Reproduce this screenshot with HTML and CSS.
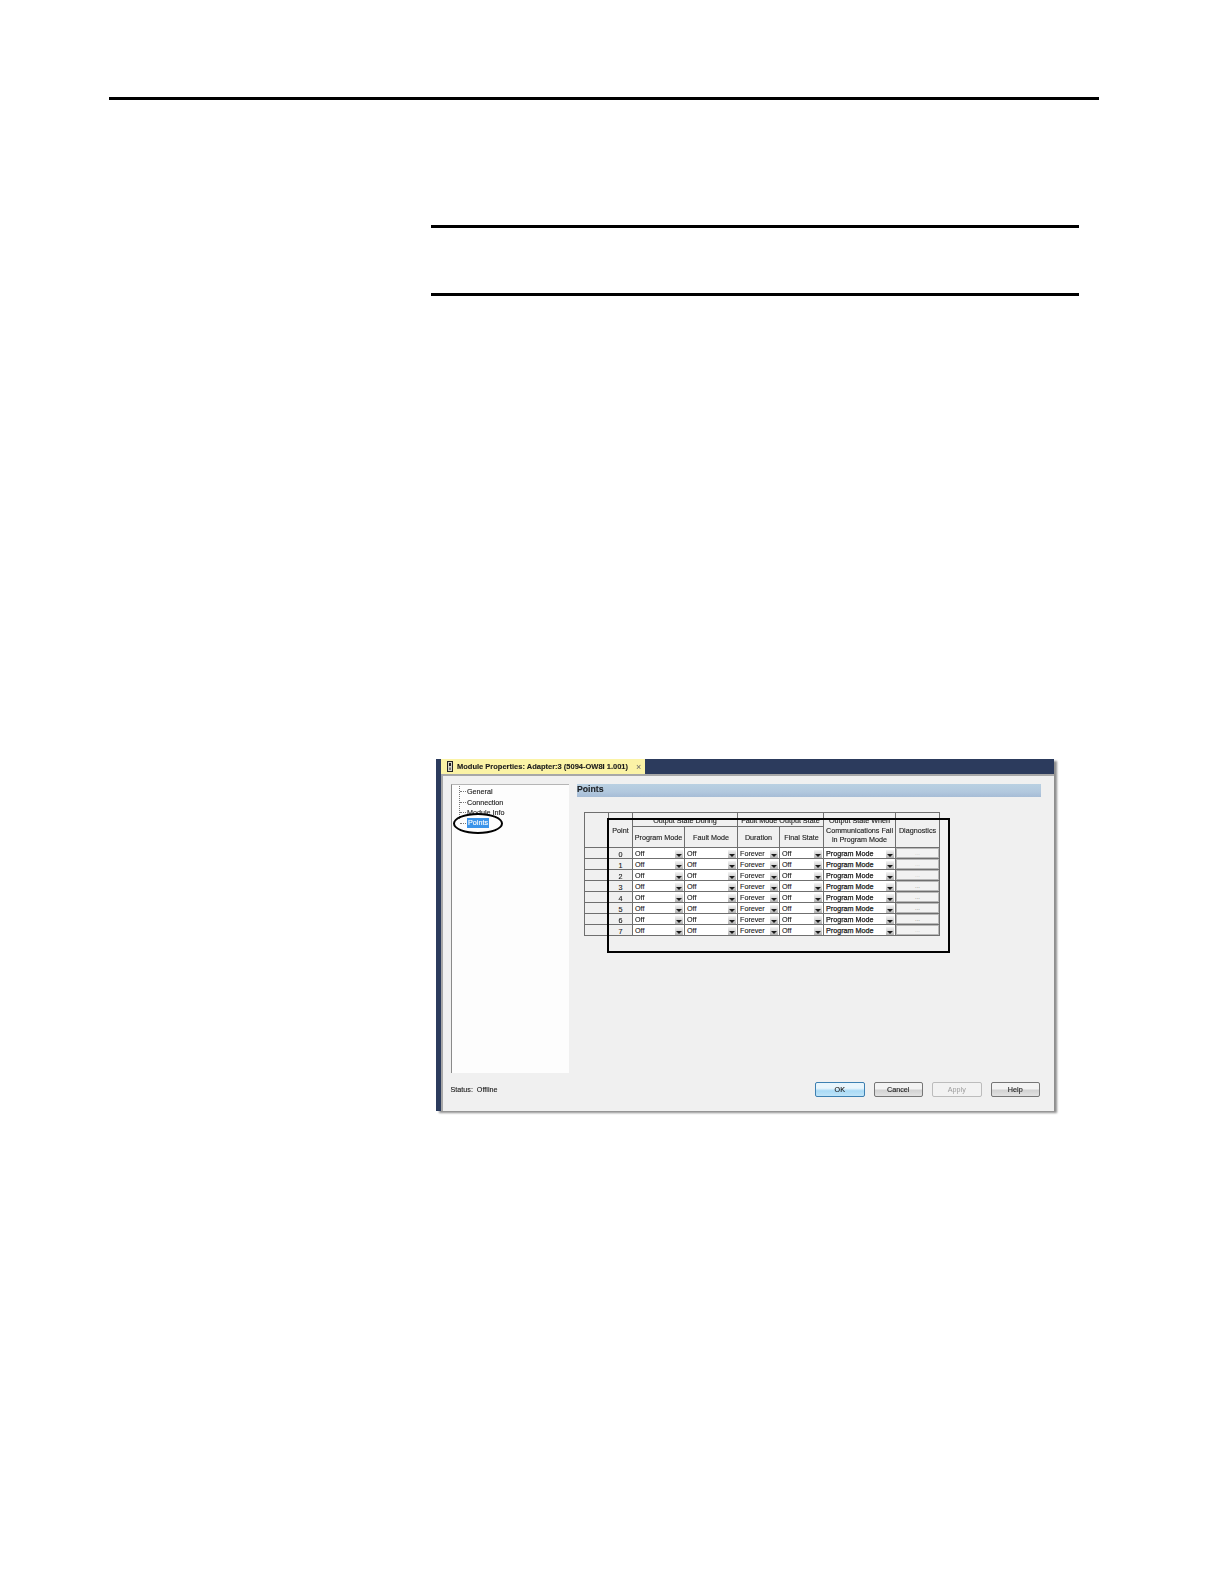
FILE: index.html
```html
<!DOCTYPE html>
<html lang="en">
<head>
<meta charset="utf-8">
<title>Module Properties</title>
<link rel="stylesheet" href="styles.css">
</head>
<body>
<div class="page-rule"></div>
<div class="note-rule note-top"></div>
<div class="note-rule note-bottom"></div>
<section class="dialog">
  <header class="titlebar">
    <div class="tab">
      <svg class="tab-icon" width="6" height="11" viewBox="0 0 6 11"><rect x="0.5" y="0.5" width="5" height="10" fill="#d8d8c8" stroke="#222"/><rect x="2" y="2" width="2" height="3" fill="#222"/><rect x="2" y="6.5" width="2" height="2.5" fill="#777"/></svg>
      <span class="tab-title">Module Properties: Adapter:3 (5094-OW8I 1.001)</span>
      <span class="tab-close">×</span>
    </div>
  </header>
  <div class="titleshade"></div>
  <div class="content">
    <nav class="tree">
      <ul class="tree-list">
        <li class="tree-item"><span>General</span></li>
        <li class="tree-item"><span>Connection</span></li>
        <li class="tree-item"><span>Module Info</span></li>
        <li class="tree-item"><span class="selected">Points</span></li>
      </ul>
    </nav>
    <main class="panel">
      <h2 class="panel-title">Points</h2>
      <div class="grid">
        <div class="cell hd span-r2"></div>
        <div class="cell hd span-r2 ctr">Point</div>
        <div class="cell hd span-c2 low">Output State During</div>
        <div class="cell hd span-c2 low">Fault Mode Output State</div>
        <div class="cell hd span-r2 ctr multi">Output State When<br>Communications Fail<br>in Program Mode</div>
        <div class="cell hd span-r2 ctr">Diagnostics</div>
        <div class="cell hd ctr">Program Mode</div>
        <div class="cell hd ctr">Fault Mode</div>
        <div class="cell hd ctr">Duration</div>
        <div class="cell hd ctr">Final State</div>

        <div class="cell hd"></div><div class="cell hd num">0</div><div class="cell val">Off<i class="drop"></i></div><div class="cell val">Off<i class="drop"></i></div><div class="cell val">Forever<i class="drop"></i></div><div class="cell val">Off<i class="drop"></i></div><div class="cell val strong">Program Mode<i class="drop"></i></div><div class="cell hd diag"><b class="dots faint">...</b></div>
        <div class="cell hd"></div><div class="cell hd num">1</div><div class="cell val">Off<i class="drop"></i></div><div class="cell val">Off<i class="drop"></i></div><div class="cell val">Forever<i class="drop"></i></div><div class="cell val">Off<i class="drop"></i></div><div class="cell val strong">Program Mode<i class="drop"></i></div><div class="cell hd diag"><b class="dots faint">...</b></div>
        <div class="cell hd"></div><div class="cell hd num">2</div><div class="cell val">Off<i class="drop"></i></div><div class="cell val">Off<i class="drop"></i></div><div class="cell val">Forever<i class="drop"></i></div><div class="cell val">Off<i class="drop"></i></div><div class="cell val strong">Program Mode<i class="drop"></i></div><div class="cell hd diag"><b class="dots faint">...</b></div>
        <div class="cell hd"></div><div class="cell hd num">3</div><div class="cell val">Off<i class="drop"></i></div><div class="cell val">Off<i class="drop"></i></div><div class="cell val">Forever<i class="drop"></i></div><div class="cell val">Off<i class="drop"></i></div><div class="cell val strong">Program Mode<i class="drop"></i></div><div class="cell hd diag"><b class="dots">...</b></div>
        <div class="cell hd"></div><div class="cell hd num">4</div><div class="cell val">Off<i class="drop"></i></div><div class="cell val">Off<i class="drop"></i></div><div class="cell val">Forever<i class="drop"></i></div><div class="cell val">Off<i class="drop"></i></div><div class="cell val strong">Program Mode<i class="drop"></i></div><div class="cell hd diag"><b class="dots">...</b></div>
        <div class="cell hd"></div><div class="cell hd num">5</div><div class="cell val">Off<i class="drop"></i></div><div class="cell val">Off<i class="drop"></i></div><div class="cell val">Forever<i class="drop"></i></div><div class="cell val">Off<i class="drop"></i></div><div class="cell val strong">Program Mode<i class="drop"></i></div><div class="cell hd diag"><b class="dots">...</b></div>
        <div class="cell hd"></div><div class="cell hd num">6</div><div class="cell val">Off<i class="drop"></i></div><div class="cell val">Off<i class="drop"></i></div><div class="cell val">Forever<i class="drop"></i></div><div class="cell val">Off<i class="drop"></i></div><div class="cell val strong">Program Mode<i class="drop"></i></div><div class="cell hd diag"><b class="dots">...</b></div>
        <div class="cell hd"></div><div class="cell hd num">7</div><div class="cell val">Off<i class="drop"></i></div><div class="cell val">Off<i class="drop"></i></div><div class="cell val">Forever<i class="drop"></i></div><div class="cell val">Off<i class="drop"></i></div><div class="cell val strong">Program Mode<i class="drop"></i></div><div class="cell hd diag"><b class="dots faint">...</b></div>
      </div>
    </main>
  </div>
  <footer class="footer">
    <span class="status">Status:&nbsp; Offline</span>
    <div class="buttons">
      <span class="btn btn-ok">OK</span>
      <span class="btn">Cancel</span>
      <span class="btn btn-off">Apply</span>
      <span class="btn">Help</span>
    </div>
  </footer>
  <div class="mark-rect"></div>
  <div class="mark-oval"></div>
</section>
</body>
</html>
```

FILE: styles.css
```css
* { box-sizing: border-box; }
html, body { margin: 0; padding: 0; background: #fff; }
body {
  width: 1224px;
  height: 1584px;
  padding-top: 97px;
  font-family: "Liberation Sans", Arial, sans-serif;
  overflow: hidden;
}
.page-rule { height: 3px; width: 990px; margin-left: 109px; background: #000; }
.note-rule { height: 3px; width: 648px; margin-left: 431px; background: #000; }
.note-top { margin-top: 125px; }
.note-bottom { margin-top: 65px; }

.dialog {
  position: relative;
  width: 618px;
  height: 352px;
  margin: 463px 0 0 436px;
  background: #f0f0f0;
  border-left: 5px solid #2b3a5c;
  box-shadow: 3px 2px 2px #8f8f8f;
  color: #1a1a1a;
  font-size: 7.2px;
  -webkit-text-stroke: 0.12px #1a1a1a;
  filter: blur(0.45px);
  opacity: 0.995;
}
.titlebar {
  height: 15px;
  margin-left: -5px;
  padding-left: 5px;
  background: #2b3a5c;
}
.tab {
  display: flex;
  align-items: center;
  width: 204px;
  height: 15px;
  padding-left: 6px;
  background: #fbf3a6;
  color: #1c1c1c;
}
.tab-icon { flex: none; }
.tab-title { margin-left: 4px; font-size: 7.5px; font-weight: 700; white-space: nowrap; }
.tab-close { margin-left: 8px; font-size: 9px; color: #666; -webkit-text-stroke: 0; }
.titleshade { height: 2px; background: #a8a8a8; }

.content { display: flex; height: 304px; padding: 8px 0 0 2px; border-left: 2px solid #a8a8a8; }
.tree {
  flex: none;
  width: 117.5px;
  height: 289px;
  margin-left: 6px;
  padding-top: 1px;
  background: #fdfdfd;
  border-left: 1px solid #8a8a8a;
  border-top: 1px solid #b5b5b5;
}
.tree-list {
  list-style: none;
  height: 33px;
  margin: 0 0 0 7px;
  padding: 0;
  border-left: 1px dotted #777;
}
.tree-item { display: flex; align-items: center; height: 10.7px; white-space: nowrap; }
.tree-item::before { content: ""; width: 6px; margin-right: 1px; border-top: 1px dotted #777; }
.selected { padding: 0 1px; line-height: 10px; background: #3a94ea; color: #fff; -webkit-text-stroke: 0.12px #fff; }

.panel { flex: none; width: 464px; margin-left: 8.5px; }
.panel-title {
  height: 13px;
  margin: 0;
  font-size: 8.7px;
  line-height: 11px;
  font-weight: 700;
  color: #1c2026;
  background: linear-gradient(180deg, #b9d0e2 0, #b2c8de 60%, #a6bcd6 100%);
}
.grid {
  display: grid;
  grid-template-columns: 24px 24px 52px 53px 42px 44px 72px 44px;
  grid-template-rows: 14px 21px repeat(8, 11px);
  width: 356px;
  margin: 15px 0 0 7px;
  border-top: 1px solid #6e6e6e;
  border-left: 1px solid #6e6e6e;
}
.cell {
  display: flex;
  align-items: center;
  min-width: 0;
  overflow: hidden;
  white-space: nowrap;
  border-right: 1px solid #6e6e6e;
  border-bottom: 1px solid #6e6e6e;
}
.hd { background: #f0f0f0; }
.span-r2 { grid-row: span 2; }
.span-c2 { grid-column: span 2; }
.ctr { justify-content: center; text-align: center; }
.low { justify-content: center; align-items: flex-start; padding-top: 3px; line-height: 9px; }
.multi { line-height: 9.5px; padding-top: 1px; }
.num { justify-content: center; padding-top: 2px; }
.val { justify-content: space-between; padding-left: 2px; background: #fff; }
.strong { -webkit-text-stroke: 0.25px #1a1a1a; }
.drop {
  position: relative;
  flex: none;
  align-self: flex-end;
  width: 8px;
  height: 8px;
  margin-right: 1px;
  background: linear-gradient(#f5f5f5, #b4b4b4);
}
.drop::after {
  content: "";
  position: absolute;
  left: 1px;
  bottom: 1px;
  border-left: 3px solid transparent;
  border-right: 3px solid transparent;
  border-top: 3px solid #1a1a1a;
}
.diag { padding: 0; }
.dots {
  display: flex;
  align-items: center;
  justify-content: center;
  width: 100%;
  height: 100%;
  font-size: 6px;
  font-weight: 400;
  color: #777;
  -webkit-text-stroke: 0;
  background: #f2f2f2;
  border: 1px solid #b8b8b8;
}
.faint { color: #c0c0c0; }

.footer {
  display: flex;
  align-items: flex-start;
  justify-content: space-between;
  height: 31px;
  padding: 0 14px 0 7.5px;
  border-left: 2px solid #a8a8a8;
}
.status { margin-top: 5px; white-space: nowrap; }
.buttons { display: flex; gap: 9px; margin-top: 2px; }
.btn {
  display: flex;
  align-items: center;
  justify-content: center;
  width: 49.5px;
  height: 15px;
  border: 1px solid #757575;
  border-radius: 2px;
  background: linear-gradient(#f3f3f3 45%, #d2d2d2 55%, #e2e2e2);
}
.btn-ok { border-color: #3c7fb1; background: linear-gradient(#e8f5fc 40%, #a9daf6 60%, #bfe4f8); }
.btn-off { border-color: #bcbcbc; background: #f2f2f2; color: #9c9c9c; -webkit-text-stroke: 0; }

.mark-rect {
  position: absolute;
  left: 166px;
  top: 59px;
  width: 343px;
  height: 135px;
  border: 2px solid #000;
}
.mark-oval {
  position: absolute;
  left: 12px;
  top: 54px;
  width: 50px;
  height: 21px;
  border: 2px solid #000;
  border-radius: 50%;
}
```
